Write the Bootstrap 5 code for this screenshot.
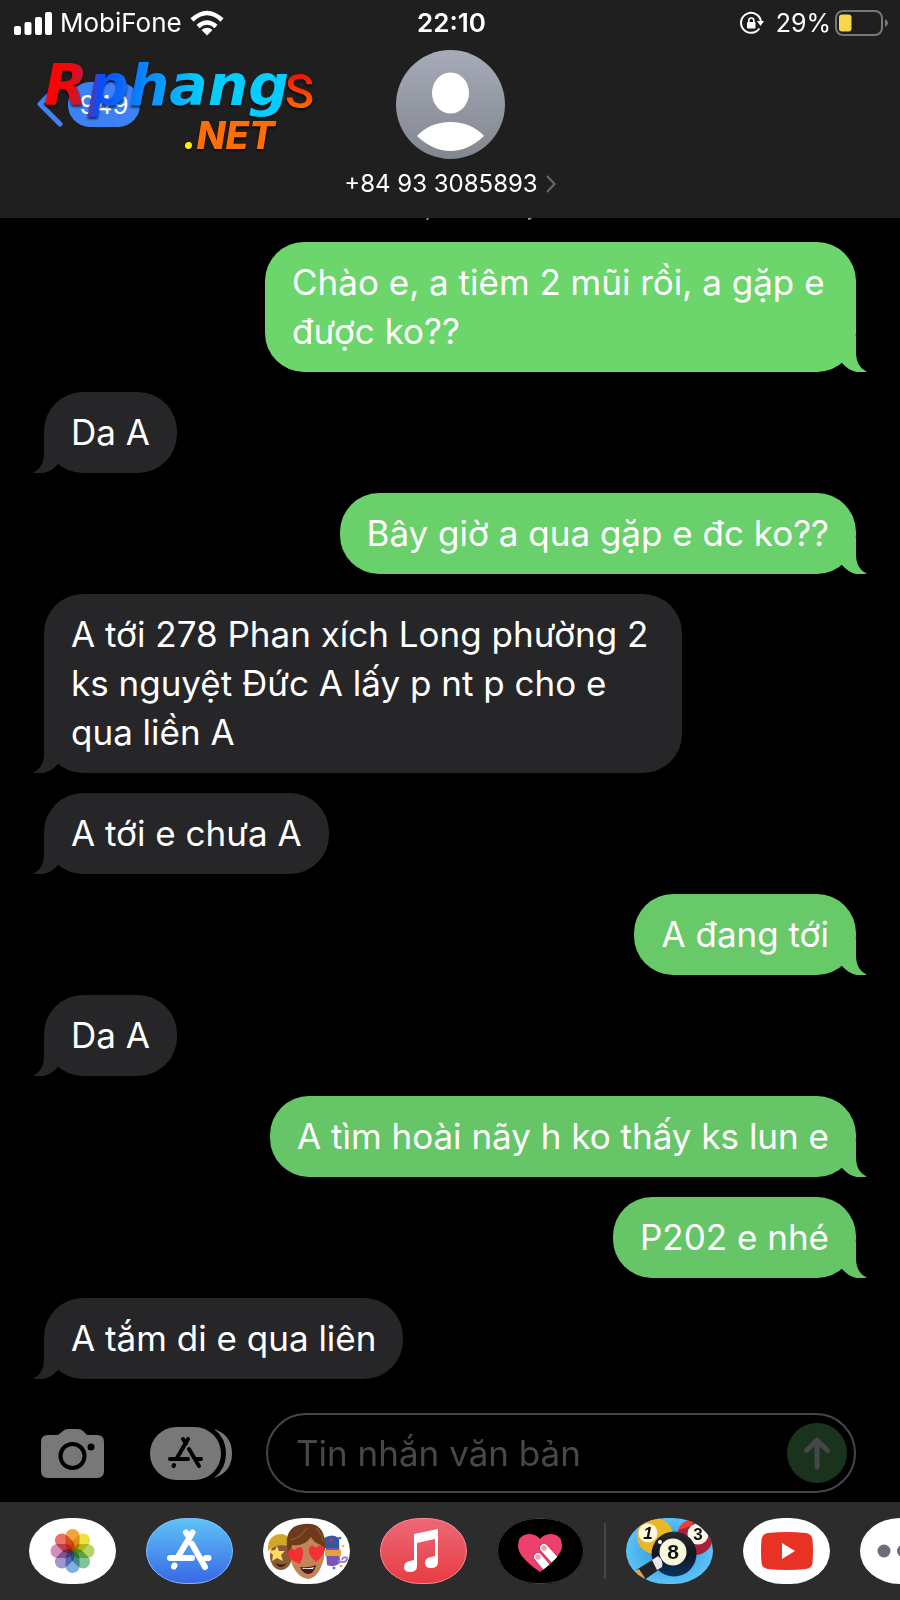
<!DOCTYPE html>
<html lang="vi">
<head>
<meta charset="utf-8">
<meta name="viewport" content="width=device-width, initial-scale=1">
<title>Tin nhắn</title>
<link href="https://cdn.jsdelivr.net/npm/bootstrap@5.3.0/dist/css/bootstrap.min.css" rel="stylesheet">
<style>
  body { background: #000; color: #fff; font-family: Inter, "Noto Sans", sans-serif; overflow-x: hidden; }
  svg { display: block; flex: none; }
  .top-area { background: #1f1f1f; padding-bottom: 19px; }
  .status-row { height: 46px; padding: 0 11px 0 14px; font-size: 26px; line-height: 46px; }
  .battery-text { font-size: 25px; }
  .brand-mark { left: 36px; top: 40px; pointer-events: none; }
  .brand-mark g, .brand-mark .end { filter: drop-shadow(0 2px 1px #000a); }
  .contact-row { padding-top: 4px; }
  .back-btn { padding: 32px 0 0 36px; }
  .unread { background: #3c82f6; width: 72px; height: 45px; border-radius: 22px; font-size: 26px; line-height: 45px; }
  .contact-name { font-size: 24px; line-height: 30px; margin-top: 10px; gap: 7px; }
  .thread { gap: 20px; padding: 0 44px; }
  .stamp { height: 4px; padding-left: 60px; }
  .msg { position: relative; max-width: 638px; padding: 16px 27px; border-radius: 39px; font-size: 35px; line-height: 49px; }
  .msg-in { background: #262628; color: #fff; align-self: flex-start; }
  .msg-out { align-self: flex-end; max-width: 591px; }
  .tone-a { background: #6cd56c; --tail: #6cd56c; }
  .tone-b { background: #69d06b; --tail: #69d06b; }
  .tone-c { background: #67c968; --tail: #67c968; }
  .tone-d { background: #66c567; --tail: #66c567; }
  .tail { position: absolute; bottom: 0; width: 28px; height: 36px; }
  .msg-out .tail { right: -11px; fill: var(--tail); }
  .msg-in .tail { left: -11px; fill: #262628; transform: scaleX(-1); }
  .composer { padding: 0 44px 9px 41px; }
  .field { border: 2px solid #464648; border-radius: 40px; height: 80px; padding: 0 7px 0 28px; margin-left: 34px; min-width: 0; }
  .field input { background: none; border: 0; outline: 0; color: #fff; font-size: 35px; min-width: 0; width: 100%; }
  .field input::placeholder { color: #48484a; opacity: 1; }
  .apps-btn { margin-left: 46px; }
  .dock { background: #2c2c2c; padding: 16px 0 16px 29px; overflow: hidden; }
  .app { width: 87px; height: 66px; border-radius: 40px / 33px; overflow: hidden; flex: none; }
  .app + .app { margin-left: 30px; }
  .petals rect { mix-blend-mode: multiply; }
  .dock .rule { width: 2px; height: 56px; background: #464648; flex: none; margin: 0 20px; }
</style>
</head>
<body>
<div class="d-flex flex-column min-vh-100">

  <header class="top-area position-relative">
    <div class="status-row row g-0 align-items-center">
      <div class="col d-flex align-items-center">
        <svg width="38" height="24" viewBox="0 0 38 24" fill="#fff"><rect y="15" width="7" height="9" rx="2"/><rect x="10.500" y="11" width="7" height="13" rx="2"/><rect x="21" y="6" width="7" height="18" rx="2"/><rect x="31" y="1" width="7" height="23" rx="2"/></svg>
        <span class="ms-2">MobiFone</span>
        <svg class="ms-2" width="34" height="26" viewBox="0 0 34 26" fill="none" stroke="#fff" stroke-width="4.500"><path d="M2 10Q17-4 32 10M8 16.500Q17 8.500 26 16.500"/><path d="M11.500 20Q17 15.500 22.500 20L17 25.500Z" fill="#fff" stroke="none"/></svg>
      </div>
      <div class="col-auto fw-semibold">22:10</div>
      <div class="col d-flex align-items-center justify-content-end">
        <svg width="24" height="24" viewBox="0 0 24 24" fill="none" stroke="#fff" stroke-width="2"><path d="M19.300 17.500A10 10 0 1 1 21 11"/><path d="M17 10h7l-3.500 5z" fill="#fff" stroke="none"/><rect x="7" y="11" width="8.500" height="6.500" rx="1" fill="#fff" stroke="none"/><path d="M8.800 11.500V9.500a2.500 2.500 0 0 1 5 0v2" stroke-width="1.600"/></svg>
        <span class="battery-text ms-2 ps-1 me-1">29%</span>
        <svg width="54" height="26" viewBox="0 0 54 26"><rect x="1" y="1" width="46" height="24" rx="7" fill="none" stroke="#777" stroke-width="2"/><rect x="4" y="4.500" width="12.500" height="17" rx="3" fill="#f8d549"/><path d="M50 9q3 1.500 3 4t-3 4z" fill="#777"/></svg>
      </div>
    </div>

    <div class="contact-row row g-0">
      <div class="col">
        <button type="button" class="back-btn btn border-0 d-flex align-items-center text-white" aria-label="Quay lại, 949 tin chưa đọc">
          <svg width="28" height="45" viewBox="0 0 28 45" fill="none" stroke="#3c82f6" stroke-width="5" stroke-linecap="round" stroke-linejoin="round"><path d="M24 2L4 22L24 42"/></svg>
          <span class="unread ms-1">949</span>
        </button>
      </div>
      <div class="col-auto d-flex flex-column align-items-center">
        <svg width="109" height="109" viewBox="0 0 109 109"><defs><linearGradient id="av" x2="0" y2="1"><stop stop-color="#a7abb8"/><stop offset="1" stop-color="#82868f"/></linearGradient></defs><circle cx="54.500" cy="54.500" r="54.500" fill="url(#av)"/><ellipse cx="54.500" cy="43" rx="18.500" ry="20.500" fill="#fff"/><path d="M21 86Q34 72 54.500 72T88 86Q72 101 54.500 101T21 86Z" fill="#fff"/></svg>
        <a href="#" class="contact-name d-flex align-items-center text-white text-decoration-none">+84 93 3085893
          <svg width="11" height="18" viewBox="0 0 11 18" fill="none" stroke="#6b6b6e" stroke-width="2"><path d="M2 1L9.500 9L2 17"/></svg></a>
      </div>
      <div class="col"></div>
    </div>

    <svg class="brand-mark position-absolute" width="300" height="140" viewBox="-4 -16 300 140">
      <defs>
        <linearGradient id="bm" gradientUnits="userSpaceOnUse" x1="5" y1="0" x2="245" y2="30"><stop offset=".1" stop-color="#fa0505"/><stop offset=".17" stop-color="#c01a3a"/><stop offset=".24" stop-color="#0a4cff"/><stop offset=".42" stop-color="#0a86ff"/><stop offset=".66" stop-color="#06ccff"/></linearGradient>
        <linearGradient id="bs" x2="0" y2="1"><stop offset=".2" stop-color="#f21108"/><stop offset=".8" stop-color="#ff6a00"/></linearGradient>
      </defs>
      <g><text x="4" y="49" font-family="DejaVu Sans" font-weight="700" font-style="italic" font-size="57" fill="url(#bm)">Rphang</text></g>
      <text class="end" x="245" y="52" font-family="Roboto" font-weight="500" font-size="48" fill="url(#bs)">S</text>
      <g><text x="143" y="93" font-family="Inter" font-weight="800" font-style="italic" font-size="38" fill="#ff6d05"><tspan fill="#fff200">.</tspan>NET</text></g>
    </svg>
  </header>

  <main class="thread d-flex flex-column flex-grow-1">
    <div class="stamp d-flex justify-content-center"><svg width="110" height="4" viewBox="0 0 110 4" fill="#8e8e93"><path d="M2 0h2l-1 2h-2zM103 0h4q-1 2-4 2z"/></svg></div>
    <div class="msg msg-out tone-a">Chào e, a tiêm 2 mũi rồi, a gặp e được ko??<svg class="tail" viewBox="0 0 28 36"><path id="tl" d="M17 0V16C17 26 21 33 28 35.500C18 38 10 35 3 27L0 20V0Z"/></svg></div>
    <div class="msg msg-in">Da A<svg class="tail" viewBox="0 0 28 36"><use href="#tl"/></svg></div>
    <div class="msg msg-out tone-b">Bây giờ a qua gặp e đc ko??<svg class="tail" viewBox="0 0 28 36"><use href="#tl"/></svg></div>
    <div class="msg msg-in">A tới 278 Phan xích Long phường 2 ks nguyệt Đức A lấy p nt p cho e <span class="text-nowrap">qua liền A</span><svg class="tail" viewBox="0 0 28 36"><use href="#tl"/></svg></div>
    <div class="msg msg-in">A tới e chưa A<svg class="tail" viewBox="0 0 28 36"><use href="#tl"/></svg></div>
    <div class="msg msg-out tone-c">A đang tới<svg class="tail" viewBox="0 0 28 36"><use href="#tl"/></svg></div>
    <div class="msg msg-in">Da A<svg class="tail" viewBox="0 0 28 36"><use href="#tl"/></svg></div>
    <div class="msg msg-out tone-d">A tìm hoài nãy h ko thấy ks lun e<svg class="tail" viewBox="0 0 28 36"><use href="#tl"/></svg></div>
    <div class="msg msg-out tone-d">P202 e nhé<svg class="tail" viewBox="0 0 28 36"><use href="#tl"/></svg></div>
    <div class="msg msg-in">A tắm di e qua liên<svg class="tail" viewBox="0 0 28 36"><use href="#tl"/></svg></div>
  </main>

  <form class="composer d-flex align-items-center">
    <button type="button" class="btn p-0 border-0" aria-label="Máy ảnh">
      <svg width="63" height="49" viewBox="0 0 63 49"><path d="M7 6H17L22 2Q24 0 27 0H37Q40 0 42 2L46 6H56Q63 6 63 13V42Q63 49 56 49H7Q0 49 0 42V13Q0 6 7 6Z" fill="#787878"/><circle cx="31.500" cy="27" r="12" fill="none" stroke="#000" stroke-width="4"/><circle cx="50" cy="18" r="3.500"/></svg>
    </button>
    <button type="button" class="apps-btn btn p-0 border-0" aria-label="Ứng dụng">
      <svg width="82" height="53" viewBox="0 0 82 53"><path d="M64 2Q82 8 82 26.500T64 51Q76 42 76 26.500T64 2Z" fill="#787878"/><rect width="71" height="53" rx="26.500" fill="#787878"/><g stroke="#000" stroke-width="4" stroke-linecap="round" fill="none"><path d="M38 12L27 31M33 12L36 16.500M20 32H38M47 32H51M39 22L49 39M24 38L23.500 39"/></g></svg>
    </button>
    <div class="field d-flex align-items-center flex-grow-1">
      <label class="visually-hidden" for="msgbox">Tin nhắn văn bản</label>
      <input id="msgbox" type="text" class="flex-grow-1 p-0" placeholder="Tin nhắn văn bản">
      <button type="button" class="btn p-0 border-0" aria-label="Gửi">
        <svg width="60" height="60" viewBox="0 0 60 60"><circle cx="30" cy="30" r="30" fill="#1a331c"/><path d="M30 44V17M19.500 27.500L30 17L40.500 27.500" fill="none" stroke="#464648" stroke-width="5" stroke-linecap="round" stroke-linejoin="round"/></svg>
      </button>
    </div>
  </form>

  <nav class="dock d-flex align-items-center" aria-label="Ứng dụng tin nhắn">
    <a href="#" class="app bg-white" aria-label="Ảnh"><svg width="87" height="66" viewBox="0 0 87 66"><g class="petals" transform="translate(43.500 33)"><rect x="-7" y="-22" width="14" height="22" rx="7" fill="#f0a43c"/><rect x="-7" y="-22" width="14" height="22" rx="7" fill="#f0e040" transform="rotate(45)"/><rect x="-7" y="-22" width="14" height="22" rx="7" fill="#b8d468" transform="rotate(90)"/><rect x="-7" y="-22" width="14" height="22" rx="7" fill="#80c49a" transform="rotate(135)"/><rect x="-7" y="-22" width="14" height="22" rx="7" fill="#7db2e0" transform="rotate(180)"/><rect x="-7" y="-22" width="14" height="22" rx="7" fill="#a095cc" transform="rotate(225)"/><rect x="-7" y="-22" width="14" height="22" rx="7" fill="#cf8fba" transform="rotate(270)"/><rect x="-7" y="-22" width="14" height="22" rx="7" fill="#ec7167" transform="rotate(315)"/></g></svg></a>
    <a href="#" class="app" aria-label="App Store"><svg width="87" height="66" viewBox="0 0 87 66"><defs><linearGradient id="as" x2="0" y2="1"><stop stop-color="#5fc4f6"/><stop offset="1" stop-color="#3767e6"/></linearGradient></defs><rect width="87" height="66" fill="url(#as)"/><rect x=".5" y=".5" width="86" height="65" rx="39" ry="32.500" fill="none" stroke="#8ab8f8"/><g stroke="#fff" stroke-width="6" stroke-linecap="round" fill="none"><path d="M46.500 14.500L32.500 38M40 14.500L43.500 20M24 40H46M60 40H62.500M46 26L59 49M28.500 47.500L28 48.500"/></g></svg></a>
    <a href="#" class="app bg-white" aria-label="Memoji"><svg width="87" height="66" viewBox="0 0 87 66">
      <ellipse cx="18" cy="38" rx="11" ry="14" fill="#8b5a34"/><path d="M5 33Q4 16 19 16Q28 17 28 29Q15 24 5 33Z" fill="#d2a629"/><path d="M14 28l2 5 6 0-4 4 2 6-6-3-5 3 1-6-4-4 6-1z" fill="#ffdc61"/><path d="M12 45Q18 48 24 45Q18 53 12 45Z" fill="#441c16"/>
      <path d="M62 21Q70 15 76 21L77 45Q72 50 64 47Z" fill="#7657b5"/><path d="M61 20Q69 15 76 20V30H61Z" fill="#3258a3"/><path d="M62 32H78V38H62Z" fill="#e5a23b"/><path d="M75 43Q84 46 84 40Q80 38 79 42" fill="none" stroke="#9b80cc" stroke-width="2"/><circle cx="77" cy="20" r="1.300" fill="#3567df"/><circle cx="80" cy="28" r="1.300" fill="#f0c42c"/><circle cx="71" cy="50" r="1.300" fill="#3567df"/><circle cx="78" cy="48" r="1.300" fill="#f5943a"/><circle cx="68" cy="22" r="2" fill="#c43145"/>
      <path d="M26 26Q26 11 43 11Q61 11 61 27L61 40Q56 60 45 61Q33 59 28 43Z" fill="#c08559"/><path d="M25 35Q19 8 41 6Q64 3 62 33L58 27Q50 24 48 19Q41 29 29 27L27 37Z" fill="#6d3a1c"/><path d="M27 22Q36 21 44 10M53 10Q59 15 60 24" fill="none" stroke="#8a5228" stroke-width="1.500"/>
      <path d="M37 46Q24 41 25 34Q27 28 32 32Q34 28 39 30Q42 35 37 46ZM53 44Q44 36 46 30Q49 25 53 30Q57 25 61 29Q64 35 53 44Z" fill="#f52f32"/><path d="M37 49Q46 50 53 47Q51 56 45 56Q39 55 37 49Z" fill="#551a18"/><path d="M39 50Q46 51 51 49L50 51H40Z" fill="#fff"/></svg></a>
    <a href="#" class="app" aria-label="Âm nhạc"><svg width="87" height="66" viewBox="0 0 87 66"><defs><linearGradient id="mu" x2="0" y2="1"><stop stop-color="#ed6878"/><stop offset="1" stop-color="#e73c42"/></linearGradient></defs><rect width="87" height="66" fill="url(#mu)"/><rect x=".5" y=".5" width="86" height="65" rx="39" ry="32.500" fill="none" stroke="#f18d99"/><path d="M34 16L58 11V44Q58 50 51 50Q45 50 45 45Q45 40 51 39L55 38V21L37 25V48Q37 54 30 54Q24 54 24 49Q24 44 30 43L34 42Z" fill="#fff"/></svg></a>
    <a href="#" class="app bg-black" aria-label="Digital Touch"><svg width="87" height="66" viewBox="0 0 87 66"><defs><clipPath id="hc"><path d="M43 54Q21 39 21 28Q21 17 31 16Q39 16 43 21Q47 16 55 16Q65 17 65 28Q65 38 43 54Z"/></clipPath></defs><rect x=".5" y=".5" width="86" height="65" rx="39" ry="32.500" fill="none" stroke="#454545"/><g clip-path="url(#hc)"><rect width="87" height="66" fill="#ee406c"/><path d="M47 30L66 51M41 39L58 59" stroke="#c42f56" stroke-width="9.500" stroke-linecap="round"/><path d="M47 30L66 51M41 39L58 59" stroke="#fff" stroke-width="8" stroke-linecap="round"/><circle cx="47" cy="30" r="2.700" fill="#f3a0b3"/><circle cx="41" cy="39" r="2.700" fill="#f3a0b3"/></g></svg></a>
    <span class="rule"></span>
    <a href="#" class="app" aria-label="8 Ball Pool"><svg width="87" height="66" viewBox="0 0 87 66"><defs><radialGradient id="po"><stop stop-color="#268bd5"/><stop offset="1" stop-color="#5bc3f8"/></radialGradient><linearGradient id="b8" x2="0" y2="1"><stop stop-color="#2a2a2c"/><stop offset=".5" stop-color="#0f1622"/><stop offset="1" stop-color="#0b3260"/></linearGradient></defs><rect width="87" height="66" fill="url(#po)"/><circle cx="29" cy="18" r="18" fill="#eab728"/><circle cx="69" cy="19" r="18" fill="#a8213b"/><path d="M52 12Q57 1 69 1L65 8Z" fill="#fb392e"/><circle cx="22" cy="15" r="9.500" fill="#fff8dc"/><circle cx="72" cy="16" r="10.500" fill="#fff8e8"/><circle cx="48" cy="36" r="22.500" fill="url(#b8)"/><circle cx="47" cy="34" r="13.500" fill="#f8f7dc"/><circle cx="34" cy="24" r="2" fill="#fff"/><path d="M10 52L28 41L34 51L18 62Z" fill="#222427"/><path d="M26 42L32 38Q38 43 36 49L31 52Z" fill="#e8e8ee"/><path d="M6 54L13 51L19 60L14 65Z" fill="#e2a355"/><g font-family="Liberation Sans" font-weight="700" text-anchor="middle" fill="#111"><text x="22" y="21" font-size="17" font-style="italic">1</text><text x="72" y="22" font-size="17">3</text><text x="47" y="41" font-size="21">8</text></g></svg></a>
    <a href="#" class="app bg-white" aria-label="YouTube"><svg width="87" height="66" viewBox="0 0 87 66"><path d="M25 15Q43.500 13 63 15Q69 16 69.500 22Q70.500 33 69.500 45Q69 50 63 51Q43.500 53 25 51Q19 50 18.500 45Q17.500 33 18.500 22Q19 16 25 15Z" fill="#e83223"/><path d="M39 25L52 33L39 41Z" fill="#fff"/></svg></a>
    <a href="#" class="app bg-white" aria-label="Thêm"><svg width="87" height="66" viewBox="0 0 87 66" fill="#6d6c78"><circle cx="24" cy="33" r="6.500"/><circle cx="43.500" cy="33" r="6.500"/><circle cx="63" cy="33" r="6.500"/></svg></a>
  </nav>
</div>
<script src="https://cdn.jsdelivr.net/npm/bootstrap@5.3.0/dist/js/bootstrap.bundle.min.js"></script>
</body>
</html>
